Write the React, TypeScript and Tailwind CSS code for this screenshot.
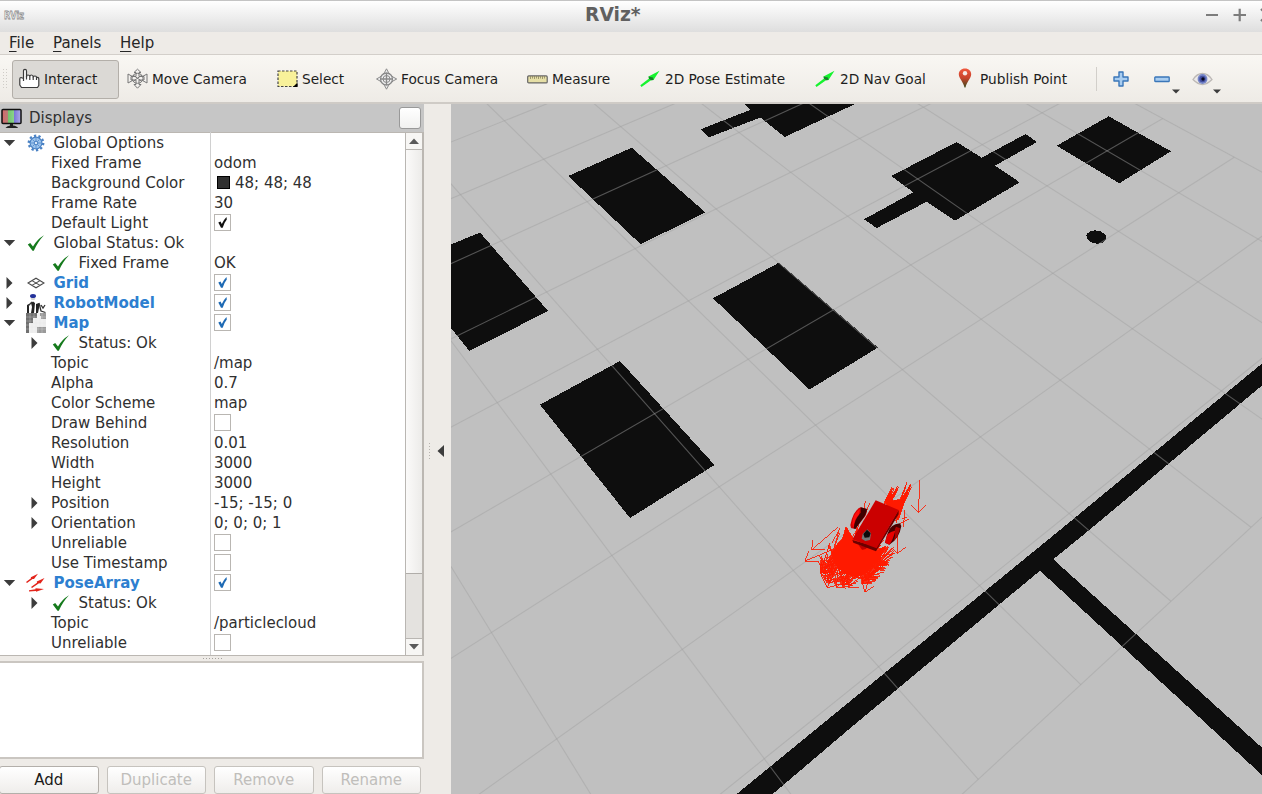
import React from "react";

type Pt = [number, number];

/* ---------- icons ---------- */

const HandIcon = () => (
  <svg width="22" height="22" viewBox="0 0 22 22" fill="#fff" stroke="#3a3a3a" strokeWidth="1.2" strokeLinejoin="round">
    <path d="M4.500 10.500V3Q4.500 1.300 6 1.300T7.500 3V9Q7.500 7 9 7T10.800 8.500Q11 7 12.500 7T14.200 9Q14.500 8 16 8T17.500 9.500Q19.800 9 19.800 11V17.500L18.500 19.500H2.500L.8 17V11Q.8 9.500 2 9.500L4.500 10.500V13" />
    <path d="M7.500 8V11.500M10.800 8.500V12M14.200 9V12M17.500 9.500V12" fill="none" />
  </svg>
);

const MoveIcon = () => (
  <svg width="22" height="22" viewBox="0 0 22 22" fill="#f4f2ef" stroke="#777" strokeWidth="1" strokeLinejoin="round">
    <path d="M1 6L5.500 8.500V12.500L1 15ZM20 6L15.500 8.500V12.500L20 15Z" />
    <path d="M10.500 1.200L14 4.500H12V8.500H17V12H12V16.500H14L10.500 20.200L7 16.500H9V12H4V8.500H9V4.500H7Z" />
    <ellipse cx="10.500" cy="10.300" rx="5.500" ry="5" fill="none" />
    <path d="M6 7L15 13.500M15 7L6 13.500" />
  </svg>
);

const SelectIcon = () => (
  <svg width="21" height="18" viewBox="0 0 21 18">
    <rect x="1" y="1" width="19" height="15.500" fill="#f8f19a" stroke="#444" strokeWidth="1.200" strokeDasharray="2.500 1.500" />
    <path d="M20.500 12.500V17H16Z" fill="#000" />
  </svg>
);

const FocusIcon = () => (
  <svg width="22" height="22" viewBox="0 0 22 22" fill="#eee" stroke="#8a8a8a" strokeWidth="1">
    <path d="M10.500 .8L12.500 4.500L17 9L20.700 11L17 13L12.500 17.500L10.500 21.200L8.500 17.500L4 13L.5 11L4 9L8.500 4.500Z" />
    <circle cx="10.500" cy="11" r="6" strokeWidth="1.300" />
    <circle cx="10.500" cy="11" r="3.500" />
    <path d="M10.500 5V17M4.500 11H16.500" strokeWidth="1.300" />
  </svg>
);

const RulerIcon = () => (
  <svg width="21" height="9" viewBox="0 0 21 9">
    <rect x=".7" y=".9" width="19.500" height="7" rx="1" fill="#e6dfa6" stroke="#666" strokeWidth="1.200" />
    <path d="M3.500 1V4M5.500 1V3.500M7.500 1V4M9.500 1V3.500M11.500 1V4M13.500 1V3.500M15.500 1V4M17.500 1V3.500" stroke="#8a8460" strokeWidth=".8" />
  </svg>
);

const ArrowIcon = () => (
  <svg width="21" height="18" viewBox="0 0 21 18">
    <path d="M.3 15.300L9 8.500L8.500 6.500L19.500 .8L13.500 10L11 10.200L1.500 17Z" fill="#16f32f" />
    <path d="M8.500 6.500L13 7.500L13.500 10L11 10.200L9 8.500Z" fill="#1a7f2c" />
  </svg>
);

const PinIcon = () => (
  <svg width="14" height="20" viewBox="0 0 14 20">
    <defs>
      <linearGradient id="pin" x1="0" y1="0" x2="0" y2="1">
        <stop offset="0" stopColor="#f0583e" />
        <stop offset=".5" stopColor="#c8432c" />
        <stop offset="1" stopColor="#3d4a1c" />
      </linearGradient>
    </defs>
    <path d="M7 .5C3.200 .5 .8 3 .8 6.200C.8 10 5.500 14 6.500 19.500H7.500C8.500 14 13.200 10 13.200 6.200C13.200 3 10.800 .5 7 .5Z" fill="url(#pin)" />
    <circle cx="7" cy="5.300" r="2.200" fill="#f6e9e6" />
  </svg>
);

const PlusIcon = () => (
  <svg width="16" height="16" viewBox="0 0 16 16">
    <path d="M6 1H10V6H15V10H10V15H6V10H1V6H6Z" fill="#a9cdf0" stroke="#3a76b8" strokeWidth="1.400" strokeLinejoin="round" />
  </svg>
);

const MinusIcon = () => (
  <svg width="16" height="7" viewBox="0 0 16 7">
    <rect x=".8" y="1" width="14.400" height="4.500" rx=".6" fill="#a9cdf0" stroke="#3a76b8" strokeWidth="1.300" />
  </svg>
);

const EyeIcon = () => (
  <svg width="21" height="14" viewBox="0 0 21 14">
    <path d="M1 7.500Q5 1.500 10.500 1.500T20 7.500Q15 12.500 10.500 12.500T1 7.500Z" fill="#eceaea" stroke="#bdb9b6" strokeWidth="1.300" />
    <circle cx="10.500" cy="7" r="4.900" fill="#7585c8" />
    <circle cx="10.500" cy="7" r="3.200" fill="#4450a0" />
    <circle cx="11" cy="7" r="1.700" fill="#080820" />
  </svg>
);

const Caret = () => (
  <svg width="8" height="5" viewBox="0 0 8 5">
    <path d="M0 .5H8L4 4.500Z" fill="#3c3c3c" />
  </svg>
);

const MonitorIcon = () => (
  <svg width="21" height="21" viewBox="0 0 21 21">
    <defs>
      <linearGradient id="scr">
        <stop offset="0" stopColor="#d8686a" />
        <stop offset=".33" stopColor="#b87f78" />
        <stop offset=".34" stopColor="#74c46f" />
        <stop offset=".64" stopColor="#8ad58a" />
        <stop offset=".65" stopColor="#7b78d8" />
        <stop offset="1" stopColor="#b0aee8" />
      </linearGradient>
    </defs>
    <rect x="1" y="1.500" width="19" height="14" rx="1" fill="url(#scr)" stroke="#111" strokeWidth="1.500" />
    <path d="M9 16H12V17.500Q16 18 17 20H4.500Q5.500 18 9 17.500Z" fill="#222" />
  </svg>
);

const GearIcon = () => (
  <svg width="18" height="18" viewBox="0 0 18 18">
    <circle cx="9" cy="9" r="7.200" fill="none" stroke="#4a82c4" strokeWidth="2.400" strokeDasharray="2.260 2.260" />
    <circle cx="9" cy="9" r="5.900" fill="#9cc3ec" stroke="#4a82c4" strokeWidth="1.200" />
    <path d="M9 4V14M4 9H14M5.500 5.500L12.500 12.500M12.500 5.500L5.500 12.500" stroke="#5b90cf" strokeWidth=".9" />
    <circle cx="9" cy="9" r="1.800" fill="#dceafa" stroke="#4a82c4" />
  </svg>
);

const CheckIcon = () => (
  <svg width="18" height="16" viewBox="0 0 18 16">
    <path d="M.8 9.500L3.200 8L6 11.500Q10 4.500 17 .3Q11 6.500 6.800 15.700H5.500Z" fill="#157a1c" />
  </svg>
);

const GridIcon = () => (
  <svg width="18" height="12" viewBox="0 0 18 12" fill="none" stroke="#4a4a4a" strokeWidth="1.100">
    <path d="M1 6L9 1.200L17 6L9 10.800ZM5 3.600L13 8.400M13 3.600L5 8.400" />
  </svg>
);

const RobotIcon = () => (
  <svg width="20" height="20" viewBox="0 0 20 20" className="overflow-visible">
    <ellipse cx="7" cy="3" rx="3" ry="2" fill="#24329a" />
    <path d="M4.500 5H9.500L8.500 7H5.500Z" fill="#d5d5d5" />
    <path d="M1 20V12L3 11V20M5 10L7 8.500L9 10L8 20H5L6 14ZM10 11L13 10V15L12 20H10Z" fill="#222" />
    <path d="M13 10L15 18L19.500 19.500M15 12L17 15L19 12M2 13L6 9" stroke="#333" strokeWidth="1.300" fill="none" />
  </svg>
);

const MapIcon = () => (
  <svg width="20" height="20" viewBox="0 0 20 20">
    <rect width="20" height="20" fill="#ececec" />
    <path d="M0 0H11V5H7V10H3V20H0Z" fill="#707070" />
    <path d="M14 0H20V6H15V3H14ZM11 14H20V20H11Z" fill="#9a9a9a" />
    <path d="M4 0V20M8 0V20M12 0V20M16 0V20M0 4H20M0 8H20M0 12H20M0 16H20" stroke="#fff" strokeOpacity=".35" strokeWidth=".7" />
  </svg>
);

const PoseIcon = () => (
  <svg width="20" height="20" viewBox="0 0 20 20" fill="#e3241b">
    <path d="M0 9L5 5.300L4.800 4.300L12 .8L8 6L6.500 6L1 10Z" />
    <path d="M5 14L11 9.800L10.800 8.500L18.500 5L14.500 10.500L13 10.300L6 15Z" />
    <path d="M3 17.200L9.500 16.300V15.200L18 16L10 18.800V18L3 18.500Z" />
  </svg>
);

/* ---------- toolbar ---------- */

const Tool = ({ icon, label, w }: { icon: React.ReactNode; label: string; w: string }) => (
  <div className={`flex h-full shrink-0 items-center ${w}`}>
    <span className="flex w-[25px] shrink-0 items-center">{icon}</span>
    <span className="whitespace-nowrap text-[13.7px] text-[#1e1e1e]">{label}</span>
  </div>
);

const Toolbar = () => (
  <div className="flex h-[49px] items-center border-b-2 border-[#cfcbc6] bg-linear-to-b from-[#f9f7f3] to-[#eeebe6] pt-px">
    <div className="mr-[4px] ml-[2px] h-[22px] w-[6px] bg-[radial-gradient(circle,#cfccc7_0.8px,transparent_1px)] bg-[size:3px_3px]" />
    <div className="h-[39px] w-[107px] rounded-[3px] border border-[#b3afa9] bg-[#dbd9d5] pl-[6px]">
      <Tool w="w-[100px]" label="Interact" icon={<HandIcon />} />
    </div>
    <div className="flex h-[39px] pl-[8px]">
      <Tool w="w-[150px]" label="Move Camera" icon={<MoveIcon />} />
      <Tool w="w-[99px]" label="Select" icon={<SelectIcon />} />
      <Tool w="w-[151px]" label="Focus Camera" icon={<FocusIcon />} />
      <Tool w="w-[113px]" label="Measure" icon={<RulerIcon />} />
      <Tool w="w-[175px]" label="2D Pose Estimate" icon={<ArrowIcon />} />
      <Tool w="w-[140px]" label="2D Nav Goal" icon={<ArrowIcon />} />
      <Tool w="w-[141px]" label="Publish Point" icon={<span className="mb-0.5 ml-[3px]"><PinIcon /></span>} />
    </div>
    <div className="mr-[16px] h-[24px] w-px bg-[#d2cfca]" />
    <PlusIcon />
    <span className="w-[25px]" />
    <MinusIcon />
    <span className="mt-[25px] ml-[2px]"><Caret /></span>
    <span className="w-[12px]" />
    <EyeIcon />
    <span className="mt-[25px]"><Caret /></span>
  </div>
);

/* ---------- display tree ---------- */

type Row = {
  label: string;
  arrow?: "open" | "closed";
  icon?: React.ReactNode;
  level?: 0 | 1;
  bold?: boolean;
  value?: string;
  swatch?: boolean;
  check?: "black" | "blue" | "empty";
};

const rows: Row[] = [
  { label: "Global Options", arrow: "open", icon: <GearIcon />, level: 0 },
  { label: "Fixed Frame", value: "odom" },
  { label: "Background Color", value: "48; 48; 48", swatch: true },
  { label: "Frame Rate", value: "30" },
  { label: "Default Light", check: "black" },
  { label: "Global Status: Ok", arrow: "open", icon: <CheckIcon />, level: 0 },
  { label: "Fixed Frame", icon: <CheckIcon />, level: 1, value: "OK" },
  { label: "Grid", arrow: "closed", icon: <GridIcon />, level: 0, bold: true, check: "blue" },
  { label: "RobotModel", arrow: "closed", icon: <RobotIcon />, level: 0, bold: true, check: "blue" },
  { label: "Map", arrow: "open", icon: <MapIcon />, level: 0, bold: true, check: "blue" },
  { label: "Status: Ok", arrow: "closed", icon: <CheckIcon />, level: 1 },
  { label: "Topic", value: "/map" },
  { label: "Alpha", value: "0.7" },
  { label: "Color Scheme", value: "map" },
  { label: "Draw Behind", check: "empty" },
  { label: "Resolution", value: "0.01" },
  { label: "Width", value: "3000" },
  { label: "Height", value: "3000" },
  { label: "Position", arrow: "closed", value: "-15; -15; 0" },
  { label: "Orientation", arrow: "closed", value: "0; 0; 0; 1" },
  { label: "Unreliable", check: "empty" },
  { label: "Use Timestamp", check: "empty" },
  { label: "PoseArray", arrow: "open", icon: <PoseIcon />, level: 0, bold: true, check: "blue" },
  { label: "Status: Ok", arrow: "closed", icon: <CheckIcon />, level: 1 },
  { label: "Topic", value: "/particlecloud" },
  { label: "Unreliable", check: "empty" },
];

const Expander = ({ kind }: { kind?: "open" | "closed" }) => (
  <svg width="13" height="12" viewBox="0 0 13 12" className="shrink-0">
    {kind === "open" && <path d="M.8 3H12.200L6.500 9Z" fill="#3c3c3c" />}
    {kind === "closed" && <path d="M3.500 0V12L9.500 6Z" fill="#3c3c3c" />}
  </svg>
);

const CheckBox = ({ kind }: { kind: "black" | "blue" | "empty" }) => (
  <svg width="18" height="18" viewBox="0 0 18 18" className="mt-px">
    <rect x=".5" y=".5" width="16" height="16" fill="#fff" stroke="#b9b6b2" />
    {kind !== "empty" && (
      <path d="M4.300 8.500L6.500 7.500L7.800 10Q9.500 6 12.500 3L12.800 5.500Q10 9 8.700 13.700H7Z" fill={kind === "blue" ? "#1f6ab4" : "#111"} />
    )}
  </svg>
);

const TreeRow = ({ r }: { r: Row }) => {
  const nested = r.level !== 0;
  return (
    <div className="flex h-5 items-center">
      <div className={`flex h-5 w-[210px] items-center pt-px ${nested ? "pl-[28px]" : "pl-[3px]"}`}>
        <Expander kind={r.arrow} />
        {r.icon ? (
          <>
            <span className="ml-[10px] flex w-[20px] shrink-0 items-center justify-center">{r.icon}</span>
            <span className={r.bold ? "ml-[7.500px] pt-px font-bold whitespace-nowrap text-[#2d7fd0]" : "ml-[7.500px] pt-px whitespace-nowrap"}>{r.label}</span>
          </>
        ) : (
          <span className="ml-[10px] pt-px whitespace-nowrap">{r.label}</span>
        )}
      </div>
      <div className="flex h-5 flex-1 items-center border-l border-[#d0d0d0] pl-[3px]">
        {r.swatch && <span className="mr-[5px] ml-[3px] size-[13px] border border-black bg-[#303030]" />}
        {r.value && <span className="pt-[2px] whitespace-nowrap">{r.value}</span>}
        {r.check && <CheckBox kind={r.check} />}
      </div>
    </div>
  );
};

const ScrollBar = () => (
  <div className="flex w-[17px] flex-col border-l border-[#b9b6b2]">
    <div className="flex h-[17px] items-center justify-center border-b border-[#b9b6b2] bg-[#f7f6f4]">
      <svg width="10" height="6" viewBox="0 0 10 6"><path d="M0 6H10L5 .5Z" fill="#5a5a5a" /></svg>
    </div>
    <div className="flex-1 border-b border-[#b0ada9] bg-linear-to-r from-[#fbfaf9] to-[#ecebe9]" />
    <div className="h-[64px] bg-[#e4e2df]" />
    <div className="flex h-[17px] items-center justify-center border-t border-[#b9b6b2] bg-[#f7f6f4]">
      <svg width="10" height="6" viewBox="0 0 10 6"><path d="M0 0H10L5 5.500Z" fill="#5a5a5a" /></svg>
    </div>
  </div>
);

const PanelButton = ({ label, on }: { label: string; on?: boolean }) => (
  <div className={`flex h-[28px] w-[99.500px] items-center justify-center rounded-[3px] border bg-linear-to-b from-white to-[#efedeb] pb-px ${on ? "border-[#b3afaa] text-[#1a1a1a]" : "border-[#c6c3be] text-[#c0bebb]"}`}>
    {label}
  </div>
);

const DisplaysPanel = () => (
  <div className="flex w-[424px] shrink-0 flex-col text-[15px] leading-5 text-[#303030]">
    <div className="flex h-[28px] items-center bg-[#c6c6c6] pr-[3px] pl-px">
      <MonitorIcon />
      <span className="ml-[7px] flex-1 pb-px">Displays</span>
      <span className="mb-px size-[22px] rounded-[3px] border border-[#999] bg-linear-to-b from-white to-[#f1f1f0]" />
    </div>
    <div className="flex h-[524px] border-y border-r-2 border-[#bbb7b2] bg-white">
      <div className="-mt-px w-[405px]">
        {rows.map((r, i) => (
          <TreeRow key={i} r={r} />
        ))}
        <div className="ml-[210px] h-[3px] w-px bg-[#d0d0d0]" />
      </div>
      <ScrollBar />
    </div>
    <div className="flex h-[5px] items-center justify-center gap-[2px]">
      {Array.from({ length: 7 }, (_, i) => (
        <span key={i} className="size-px bg-[#a5a29e]" />
      ))}
    </div>
    <div className="h-[98px] border-2 border-l-0 border-[#cac6c1] bg-white" />
    <div className="-ml-px flex gap-[8px] pt-[7px]">
      <PanelButton label="Add" on />
      <PanelButton label="Duplicate" />
      <PanelButton label="Remove" />
      <PanelButton label="Rename" />
    </div>
  </div>
);

/* ---------- 3D view ---------- */

// Perspective of the ground plane, fixed by the screen corners of one block of grid cells.
const corners: Pt[] = [
  [546.7, 292],
  [790.7, 172.3],
  [1251, 527.3],
  [978.3, 779.3],
];

function groundToScreen(i: number, j: number): Pt {
  const u = (i + 2) / 3;
  const v = (j + 3) / 6;
  const [[x0, y0], [x1, y1], [x2, y2], [x3, y3]] = corners;
  const dx1 = x1 - x2, dx2 = x3 - x2, sx = x0 - x1 + x2 - x3;
  const dy1 = y1 - y2, dy2 = y3 - y2, sy = y0 - y1 + y2 - y3;
  const det = dx1 * dy2 - dx2 * dy1;
  const g = (sx * dy2 - dx2 * sy) / det;
  const h = (dx1 * sy - sx * dy1) / det;
  const w = g * u + h * v + 1;
  return [
    ((x1 - x0 + g * x1) * u + (x3 - x0 + h * x3) * v + x0) / w,
    ((y1 - y0 + g * y1) * u + (y3 - y0 + h * y3) * v + y0) / w,
  ];
}

const gridLines: [Pt, Pt][] = [];
for (let i = -5; i <= 5; i++) gridLines.push([groundToScreen(i, -7), groundToScreen(i, 3)]);
for (let j = -7; j <= 3; j++) gridLines.push([groundToScreen(-5, j), groundToScreen(5, j)]);

let seed = 11;
const rnd = () => {
  seed = (seed * 16807) % 2147483647;
  return seed / 2147483647;
};

function arrow(x: number, y: number, a: number, len: number) {
  const tx = x - Math.cos(a) * len;
  const ty = y - Math.sin(a) * len;
  const head = (b: number) => `L${(x - Math.cos(b) * 30).toFixed(1)} ${(y - Math.sin(b) * 26).toFixed(1)}`;
  return `M${tx.toFixed(1)} ${ty.toFixed(1)}L${x.toFixed(1)} ${y.toFixed(1)}${head(a - 0.75)}M${x.toFixed(1)} ${y.toFixed(1)}${head(a + 0.75)}`;
}

let particles = "";
for (let n = 0; n < 130; n++) {
  const r = Math.sqrt(rnd());
  const t = rnd() * Math.PI * 2;
  const x = 172 + Math.cos(t) * r * 82;
  const y = 322 + Math.sin(t) * r * 62 - Math.cos(t) * r * 12;
  particles += arrow(x, y, 1.8 + rnd() * 0.75, 60 + rnd() * 20);
}
for (let n = 0; n < 26; n++) {
  const s = rnd();
  particles += arrow(270 - s * 60 + rnd() * 8, 300 + s * 75, 2.1 + rnd() * 0.5, 60);
}
// Arrow shafts fanning out behind the robot in two bunches.
for (let n = 0; n < 13; n++) {
  const s = rnd();
  particles += `M${(303 + s * 24).toFixed(1)} ${(76 + rnd() * 16).toFixed(1)}L${(262 + s * 22).toFixed(1)} 165`;
  particles += `M${(345 + s * 20).toFixed(1)} ${(66 + rnd() * 22).toFixed(1)}L${(300 + s * 25).toFixed(1)} ${(150 + rnd() * 45).toFixed(1)}`;
}

const Scene = () => (
  <svg width="811" height="690" viewBox="451 104 811 690" className="block shrink-0 bg-[#c0c0c0]">
    <g fill="#0e0e0e" shapeRendering="crispEdges">
      <path d="M631.700 147.700L705.300 212.300L640.700 244.300L568.300 176Z" />
      <path d="M480 232.500L548 311L469.500 351L451 328V244.500Z" />
      <path d="M779 262.700L878 347.500L809.500 389.500L713 298.300Z" />
      <path d="M620 361L714.500 465L630 518L540 404.700Z" />
      <path d="M700.500 129.300L709 137.300L760.500 117.500L784.700 137L855 104H744.500L750 110Z" />
      <path d="M956.700 142L981.700 157.700L1025.700 134L1037 142L995 165.700L1019.700 182.300L955 220.700L926.700 201.700L876.700 228L864 219.300L913.300 192.300L891.300 176Z" />
      <path d="M1108.700 116.300L1171 151.300L1119.300 183.300L1056.700 145.700Z" />
      <ellipse cx="1096.300" cy="237" rx="10" ry="6.500" transform="rotate(8 1096 237)" />
      <path d="M1262 363.500L1060 530L884.300 673.300L736.700 794H772.700L850 728.300L1040 570.700L1262 775V747.700L1053.300 559.300L1089.300 530L1262 385.500Z" />
    </g>
    <g stroke="#a0a0a0" strokeOpacity=".48" strokeWidth="1.100">
      {gridLines.map(([a, b], k) => (
        <line key={k} x1={a[0]} y1={a[1]} x2={b[0]} y2={b[1]} />
      ))}
    </g>
    <g transform="translate(790 460) scale(.33333)">
      <g fill="none" stroke="#ff1a00" strokeWidth="2.600" shapeRendering="crispEdges">
        <path d={particles} />
        <path d="M390 60L385 157L362 135M385 157L407 137M145 200L65 270L68 240M65 270L105 268M130 268L45 303L57 272M45 303L83 305M322 215V280L302 262M322 280L347 262M240 345L225 397L218 370M225 397L253 378" />
        <path d="M150 205L125 250M128 335L112 384L100 360M90 300L95 350L112 384L150 372M222 155L226 122M228 155L241 128M335 175L352 172M330 190L357 178M345 150L340 200M262 290L302 282M255 318L295 314M250 345L282 336" />
        <path fill="#ff1a00" d="M168 200L195 245L262 272L288 258L270 290L245 320L225 340L200 352L165 340L145 325L132 305L128 285L140 255L158 235Z" />
        <path fill="#ff1a00" d="M285 122L303 92L308 122L332 118L350 95L342 130L325 180Z" />
      </g>
      <path d="M181 195Q190 150 212 142L231 147Q232 165 218 178L196 207L183 204Z" fill="#d60000" />
      <path d="M212 142L231 147Q229 166 214 182L196 207L191 205Q194 176 212 158Z" fill="#3d0000" />
      <path d="M187 190Q190 158 210 148L206 165Q193 176 190 203Z" fill="#ff0d0d" />
      <path d="M285 248L292 222Q300 192 330 190L334 198Q328 236 298 254Z" fill="#4a0000" />
      <path d="M285 248L291 225Q303 213 316 212Q308 242 298 254Z" fill="#e80000" />
      <path d="M318 200L330 205Q324 232 311 243Q318 222 314 210Z" fill="#b00000" />
      <path d="M205 254L232 262Q228 270 216 269Z" fill="#c00000" />
      <path d="M187 240L190 248L258 274L326 163V150L260 260Z" fill="#6c0000" />
      <path d="M257 121L326 150L260 265L187 238Z" fill="#cb0000" />
      <path d="M218 222L232 208L243 220L240 240L226 243L215 236Z" fill="#777" />
      <path d="M220 222L231 209L242 220L238 232L224 233Z" fill="#0a0a0a" />
    </g>
  </svg>
);

/* ---------- window ---------- */

const MenuItem = ({ text, w }: { text: string; w: string }) => (
  <span className={w}>
    <span className="underline decoration-1 underline-offset-[3px]">{text[0]}</span>
    {text.slice(1)}
  </span>
);

export default function App() {
  return (
    <div className="flex h-[794px] w-[1262px] flex-col overflow-hidden bg-[#eeebe7] font-['DejaVu_Sans',sans-serif]">
      <div className="flex h-[32px] items-center border-t border-[#c4c4c4] bg-linear-to-b from-white to-[#dedede] pb-[3px]">
        <svg width="24" height="20" viewBox="0 0 24 20" className="ml-[3px] shrink-0">
          <text x="1" y="14" fontSize="11" fontWeight="bold" textLength="20" lengthAdjust="spacingAndGlyphs" fill="#f5f5f5" stroke="#8d8d8d" strokeWidth=".8" fontFamily="DejaVu Sans">RViz</text>
        </svg>
        <span className="ml-[558px] w-[620px] text-[18.700px] leading-6 font-bold text-[#606060]">RViz*</span>
        <svg width="57" height="14" viewBox="0 0 57 14" className="shrink-0" stroke="#7c7c7c" strokeWidth="2.200">
          <path d="M1 7H13M28.500 7H41M34.700 .8V13.200" />
          <path d="M56 1L68 13M68 1L56 13" />
        </svg>
      </div>
      <div className="flex h-[23px] items-center border-b border-[#d3cfca] pl-[9px] text-[15px] leading-5 text-[#262626]">
        <MenuItem text="File" w="w-[44px]" />
        <MenuItem text="Panels" w="w-[67px]" />
        <MenuItem text="Help" w="w-[50px]" />
      </div>
      <Toolbar />
      <div className="flex h-[690px]">
        <DisplaysPanel />
        <div className="flex w-[27px] shrink-0 items-center gap-[7px] pt-[4px] pl-[5px]">
          <span className="flex flex-col gap-[2px]">
            {Array.from({ length: 6 }, (_, i) => (
              <span key={i} className="size-px bg-[#b5b2ad]" />
            ))}
          </span>
          <svg width="7" height="12" viewBox="0 0 7 12"><path d="M7 0V12L.5 6Z" fill="#3c3c3c" /></svg>
        </div>
        <Scene />
      </div>
    </div>
  );
}
